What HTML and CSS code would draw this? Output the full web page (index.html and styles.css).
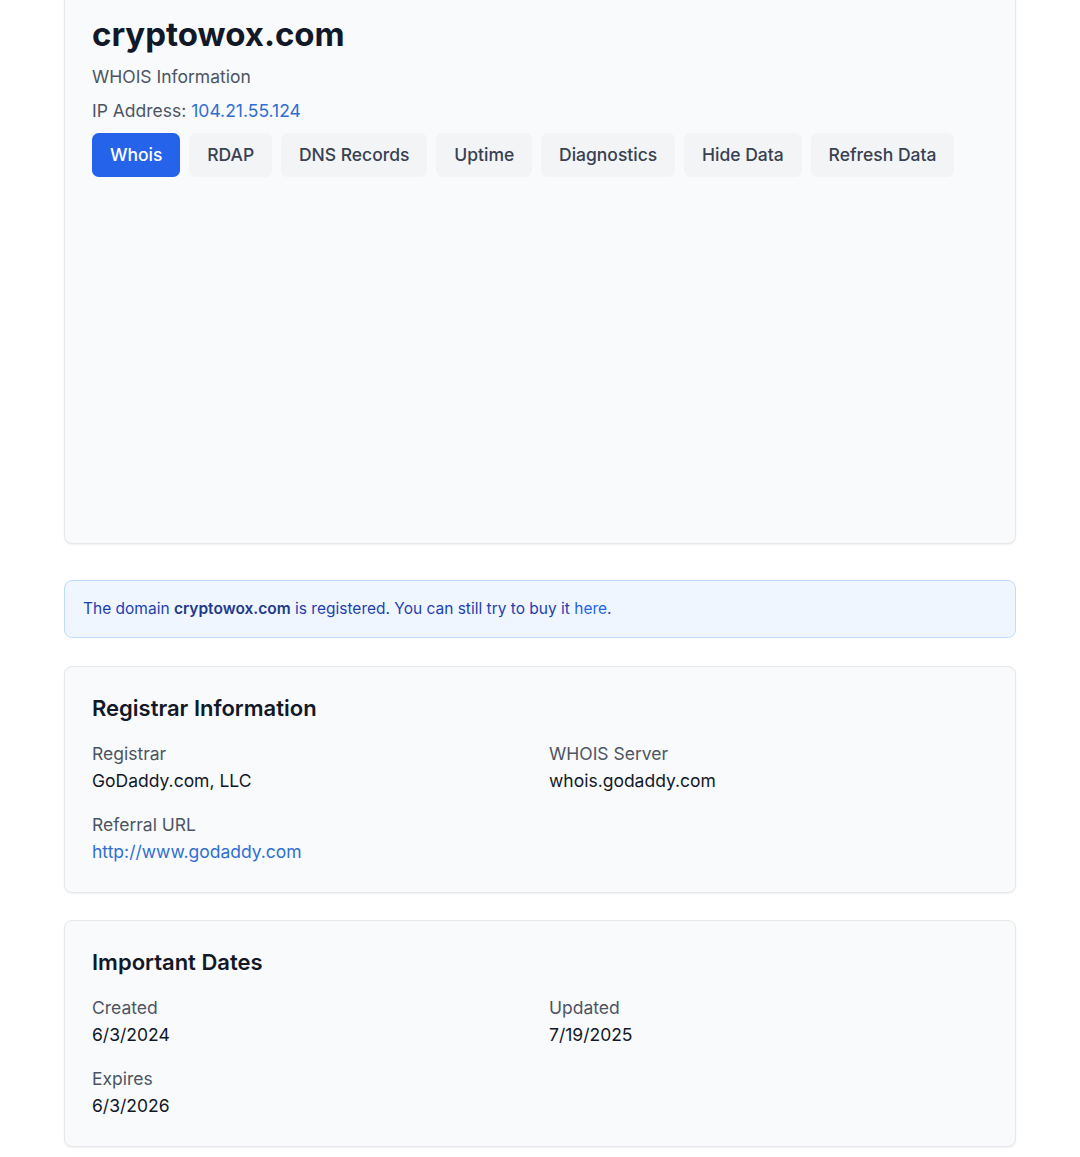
FILE: index.html
```html
<!DOCTYPE html>
<html lang="en">
<head>
<meta charset="utf-8">
<title>cryptowox.com WHOIS</title>
<link rel="stylesheet" href="styles.css">
</head>
<body>
<main class="page">
  <section class="card card-top">
    <h1 class="domain">cryptowox.com</h1>
    <p class="subtitle">WHOIS Information</p>
    <p class="ip">IP Address: <a class="link" href="#">104.21.55.124</a></p>
    <nav class="tabs">
      <button class="tab tab-active">Whois</button>
      <button class="tab">RDAP</button>
      <button class="tab">DNS Records</button>
      <button class="tab">Uptime</button>
      <button class="tab">Diagnostics</button>
      <button class="tab">Hide Data</button>
      <button class="tab">Refresh Data</button>
    </nav>
    <div class="tab-panel"></div>
  </section>

  <div class="alert"><p class="alert-text">The domain <strong>cryptowox.com</strong> is registered. You can still try to buy it <a class="alert-link" href="#">here</a>.</p></div>

  <section class="card">
    <h2 class="card-title">Registrar Information</h2>
    <div class="grid">
      <div class="item"><div class="label">Registrar</div><div class="value">GoDaddy.com, LLC</div></div>
      <div class="item"><div class="label">WHOIS Server</div><div class="value">whois.godaddy.com</div></div>
      <div class="item"><div class="label">Referral URL</div><div class="value"><a class="link" href="#">http://www.godaddy.com</a></div></div>
    </div>
  </section>

  <section class="card">
    <h2 class="card-title">Important Dates</h2>
    <div class="grid">
      <div class="item"><div class="label">Created</div><div class="value">6/3/2024</div></div>
      <div class="item"><div class="label">Updated</div><div class="value">7/19/2025</div></div>
      <div class="item"><div class="label">Expires</div><div class="value">6/3/2026</div></div>
    </div>
  </section>
</main>
</body>
</html>
```

FILE: styles.css
```css
* { box-sizing: border-box; }
html, body { margin: 0; padding: 0; background: #ffffff; }
body {
  font-family: Inter, "Noto Sans", sans-serif;
  color: #111827;
}
.page {
  width: 952px;
  margin: -14px auto 0;
  display: flex;
  flex-direction: column;
}
.card {
  background: #f9fafb;
  border: 1px solid #e5e7eb;
  border-radius: 8px;
  box-shadow: 0 1px 2px rgba(0,0,0,0.06);
  padding: 27px;
  margin-bottom: 27px;
}
.card-top { margin-bottom: 36px; }
.domain {
  margin: 0;
  font-size: 33px;
  line-height: 40px;
  font-weight: 700;
  color: #111827;
}
.subtitle {
  margin: 9px 0 0;
  font-size: 17.5px;
  line-height: 27px;
  color: #4b5563;
}
.ip {
  margin: 7px 0 0;
  font-size: 17.5px;
  line-height: 27px;
  color: #4b5563;
}
.link { color: #2f6fd1; text-decoration: none; }
.tabs {
  display: flex;
  gap: 9px;
  margin-top: 9px;
}
.tab {
  font-family: inherit;
  font-size: 17.5px;
  line-height: 26px;
  font-weight: 500;
  color: #374151;
  background: #f3f4f6;
  border: none;
  border-radius: 6.75px;
  padding: 9px 17.9px;
}
.tab-active { background: #2563eb; color: #ffffff; }
.tab-panel { height: 339px; }
.alert {
  background: #eff6ff;
  border: 1px solid #bfdbfe;
  border-radius: 8px;
  padding: 15px 18px;
  margin-bottom: 28px;
}
.alert-text {
  margin: 0;
  font-size: 15.5px;
  line-height: 26px;
  color: #1e40af;
}
.alert strong { font-weight: 600; color: #1e3a8a; }
.alert-link { color: #2563eb; text-decoration: none; }
.card-title {
  margin: 0 0 18px;
  font-size: 22px;
  line-height: 28px;
  font-weight: 600;
  color: #111827;
}
.grid {
  display: grid;
  grid-template-columns: 1fr 1fr;
  column-gap: 18px;
  row-gap: 17px;
}
.label {
  font-size: 17.5px;
  line-height: 27px;
  color: #4b5563;
}
.value {
  font-size: 17.5px;
  line-height: 27px;
  font-weight: 400;
  color: #111827;
}
```
